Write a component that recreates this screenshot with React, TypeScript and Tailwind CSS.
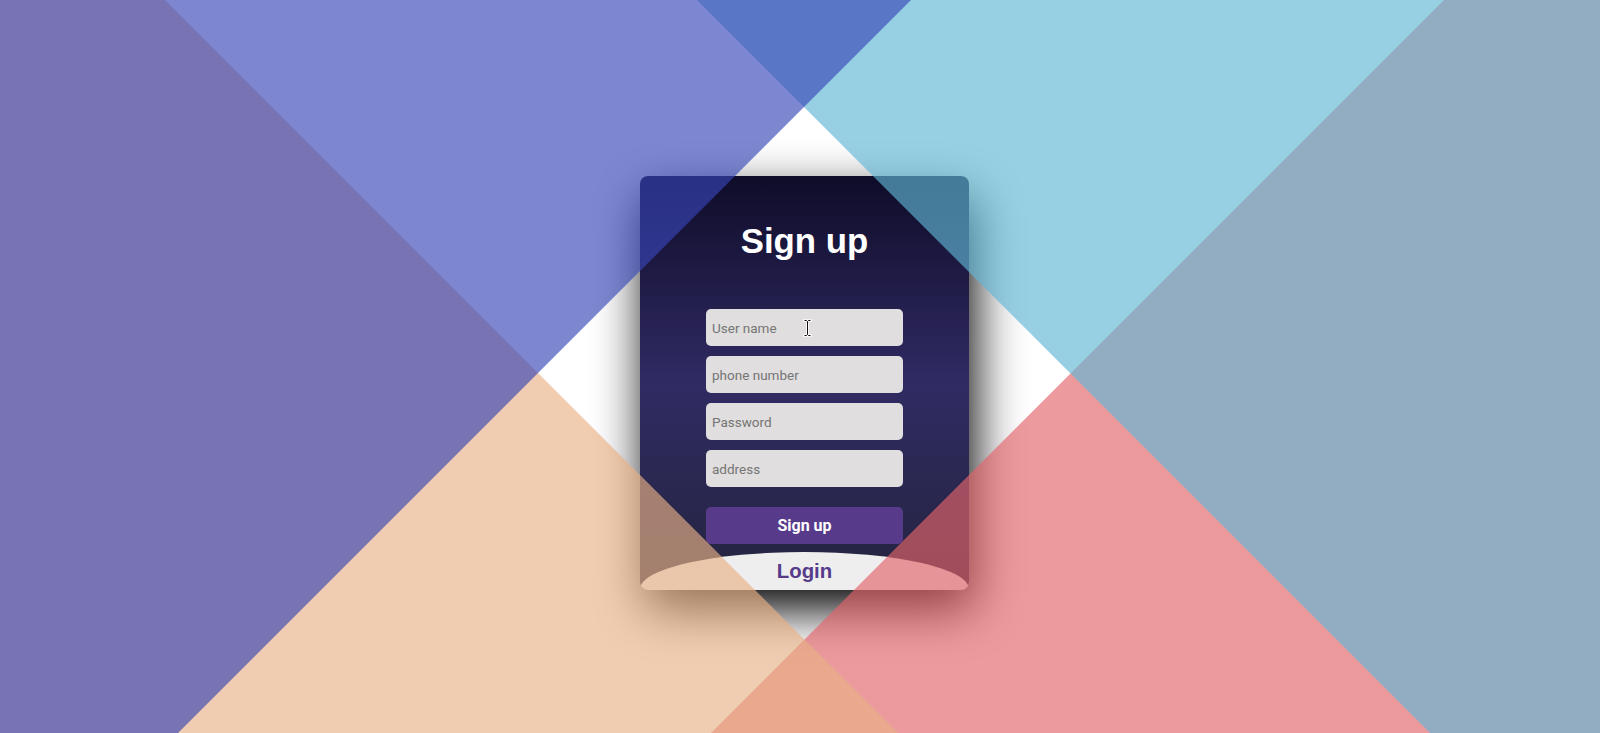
import React from "react";

function Overlay() {
  return (
    <svg
      className="pointer-events-none absolute inset-0 h-full w-full"
      viewBox="0 0 1600 733"
      preserveAspectRatio="none"
    >
      <polygon points="1444,0 1600,0 1600,733 711,733" fill="rgb(227,100,106)" fillOpacity="0.65" />
      <polygon points="697,0 1600,0 1600,733 1430,733" fill="rgb(97,183,212)" fillOpacity="0.65" />
      <polygon points="0,0 165,0 898,733 0,733" fill="rgb(232,176,133)" fillOpacity="0.65" />
      <polygon points="0,0 911,0 178,733 0,733" fill="rgb(55,69,183)" fillOpacity="0.65" />
    </svg>
  );
}

function IBeam() {
  return (
    <svg className="pointer-events-none absolute left-[803px] top-[319px]" width="9" height="18" viewBox="0 0 9 18">
      <path
        d="M1.5 1.5 H3.5 L4.5 2.5 L5.5 1.5 H7.5 M4.5 2.5 V15.5 M1.5 16.5 H3.5 L4.5 15.5 L5.5 16.5 H7.5"
        fill="none"
        stroke="#fff"
        strokeWidth="2.6"
        strokeLinecap="square"
      />
      <path
        d="M1.5 1.5 H3.5 L4.5 2.5 L5.5 1.5 H7.5 M4.5 2.5 V15.5 M1.5 16.5 H3.5 L4.5 15.5 L5.5 16.5 H7.5"
        fill="none"
        stroke="#111"
        strokeWidth="1"
      />
    </svg>
  );
}

const inputCls =
  "block mx-auto w-[197px] h-[37px] rounded-[5px] bg-[#e0dede] pl-[6px] text-[13.5px] text-black outline-none border-none placeholder:text-[#757575] font-['Roboto',sans-serif]";

export default function App() {
  return (
    <div className="relative h-[733px] w-full overflow-hidden bg-white">
      <div className="flex justify-center pl-[9px] pt-[176px]">
        <div className="w-[329px] h-[414px] overflow-hidden rounded-[8px] shadow-[5px_20px_50px_#000] bg-[linear-gradient(to_bottom,#0f0c29,#302b63,#24243e)]">
          <div className="mt-[45px] text-center text-[34.8px] leading-[40px] font-bold text-white font-['Liberation_Sans',Arial,sans-serif]">
            Sign up
          </div>
          <div className="mt-[48px] flex flex-col gap-[10px]">
            <input className={inputCls} placeholder="User name" />
            <input className={inputCls} placeholder="phone number" />
            <input className={inputCls} placeholder="Password" />
            <input className={inputCls} placeholder="address" />
          </div>
          <button className="mt-[20px] mx-auto block w-[197px] h-[37px] rounded-[5px] bg-[#573b8a] text-white text-[16px] font-bold font-['Roboto',sans-serif]">
            Sign up
          </button>
          <div className="mt-[8px] h-[444px] w-full rounded-[60%/10%] bg-[#eeeeee]">
            <div className="pt-[7px] text-center text-[20.4px] leading-[24px] font-bold text-[#573b8a] font-['Liberation_Sans',Arial,sans-serif]">
              Login
            </div>
          </div>
        </div>
      </div>
      <Overlay />
      <IBeam />
    </div>
  );
}
